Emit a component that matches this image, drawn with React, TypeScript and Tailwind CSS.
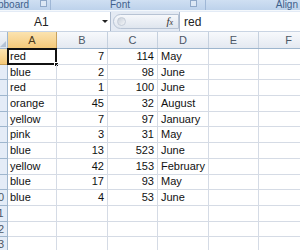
import React from 'react';

const rows: [string, number, number, string][] = [
  ['red', 7, 114, 'May'],
  ['blue', 2, 98, 'June'],
  ['red', 1, 100, 'June'],
  ['orange', 45, 32, 'August'],
  ['yellow', 7, 97, 'January'],
  ['pink', 3, 31, 'May'],
  ['blue', 13, 523, 'June'],
  ['yellow', 42, 153, 'February'],
  ['blue', 17, 93, 'May'],
  ['blue', 4, 53, 'June'],
];

const cols = ['A', 'B', 'C', 'D', 'E', 'F'];
const widths = ['w-[49px]', 'w-[51px]', 'w-[50px]', 'w-[51px]', 'w-[50px]', 'w-[60px]'];

const App: React.FC = () => {
  const allRows = [...rows.map((r) => r as (string | number)[]), [], [], []];

  return (
    <div className="w-[300px] h-[250px] overflow-hidden bg-white font-['Liberation_Sans',Arial,sans-serif] text-[11px] text-[#111]">
      {/* ribbon group labels */}
      <div className="flex h-[10px] bg-gradient-to-b from-[#cfdff2] to-[#bdd2eb] text-[10px] leading-[9px] text-[#3e5f8c] overflow-hidden">
        <div className="w-[51px] flex items-start border-r border-[#9fb7d6] relative">
          <span className="-ml-[2px]">pboard</span>
          <span className="absolute left-[40px] top-0 w-[7px] h-[7px] border border-[#8fa8c8] bg-[#dde8f5]"></span>
        </div>
        <div className="w-[155px] flex justify-center pr-[16px] border-r border-[#9fb7d6] relative">
          <span>Font</span>
          <span className="absolute right-[8px] top-0 w-[7px] h-[7px] border border-[#8fa8c8] bg-[#dde8f5]"></span>
        </div>
        <div className="flex-1 flex justify-end pr-[2px]">
          <span>Align</span>
        </div>
      </div>
      <div className="h-[2px] bg-[#e3ebf6] border-t border-[#f4f8fc]"></div>

      {/* formula bar */}
      <div className="flex h-[20px] bg-[#e4eaf3] border-b border-[#c9d4e3]">
        <div className="w-[111px] bg-white border-r border-[#aab8cc] flex items-center relative">
          <span className="ml-[34px] text-[12px] text-[#222]">A1</span>
          <span className="absolute left-[102px] top-[8px] w-0 h-0 border-l-[3px] border-r-[3px] border-t-[3px] border-l-transparent border-r-transparent border-t-[#222]"></span>
        </div>
        <div className="w-[68px] flex items-center pl-[2px] py-[2px]">
          <div className="h-full flex-1 rounded-l-full bg-gradient-to-b from-[#f6f8fb] to-[#dfe5ee] border border-[#b7c3d4] flex items-center justify-between pr-[5px]">
            <span className="ml-[3px] w-[9px] h-[9px] rounded-full bg-gradient-to-br from-[#c9d0da] to-[#f3f5f8] border border-[#c4ccd8]"></span>
            <span className="font-['Liberation_Serif',serif] italic text-[11px] text-[#333]">f<span className="text-[8px]">x</span></span>
          </div>
        </div>
        <div className="flex-1 bg-white border-l border-[#aab8cc] flex items-center pl-[4px] text-[12px] text-[#222]">red</div>
      </div>

      {/* column headers */}
      <div className="flex h-[17px] border-b border-[#9eb6ce]">
        <div className="w-[8px] shrink-0 bg-gradient-to-b from-[#f2f5f9] to-[#dfe6ef] border-r border-[#9eb6ce] relative overflow-hidden">
          <span className="absolute right-[1px] bottom-[1px] w-0 h-0 border-b-[6px] border-l-[6px] border-b-[#b4c3d6] border-l-transparent"></span>
        </div>
        {cols.map((c, i) => (
          <div
            key={c}
            className={`${widths[i]} shrink-0 flex items-center justify-center border-r text-[11px] ${
              i === 0
                ? 'bg-gradient-to-b from-[#fbe3b0] to-[#f4c979] border-[#c7a15c] text-[#4a3a1c]'
                : 'bg-gradient-to-b from-[#f7f9fc] to-[#e4e9f1] border-[#c5d0de] text-[#4d5766]'
            }`}
          >
            {c}
          </div>
        ))}
      </div>

      {/* data */}
      {allRows.map((r, ri) => (
        <div key={ri} className="flex h-[15.7px]">
          <div
            className={`w-[8px] shrink-0 overflow-hidden border-r border-b flex justify-end ${
              ri === 0
                ? 'bg-gradient-to-b from-[#fbe3b0] to-[#f4c979] border-[#c7a15c]'
                : 'bg-[#e4ecf7] border-[#9eb6ce]'
            }`}
          >
            <span className="w-[26px] shrink-0 text-center text-[11px] leading-[15px] text-[#4d5766] -mr-[4px]">{ri + 1 >= 10 ? ri + 1 : ''}</span>
          </div>
          {cols.map((c, ci) => {
            const v = r[ci];
            const isNum = typeof v === 'number';
            const selected = ri === 0 && ci === 0;
            return (
              <div
                key={c}
                className={`${widths[ci]} shrink-0 border-r border-b border-[#d5dbe5] flex items-center leading-none relative ${
                  isNum ? 'justify-end pr-[3px]' : ci === 3 ? 'pl-[3px]' : 'pl-[2px]'
                }`}
              >
                {v !== undefined ? v : ''}
                {selected && (
                  <>
                    <span className="absolute -left-[1px] -top-[1px] right-[-1px] bottom-[-1px] border-2 border-[#111]"></span>
                    <span className="absolute -right-[3px] -bottom-[3px] w-[5px] h-[5px] bg-[#111] border border-white"></span>
                  </>
                )}
              </div>
            );
          })}
        </div>
      ))}
    </div>
  );
};

export default App;
